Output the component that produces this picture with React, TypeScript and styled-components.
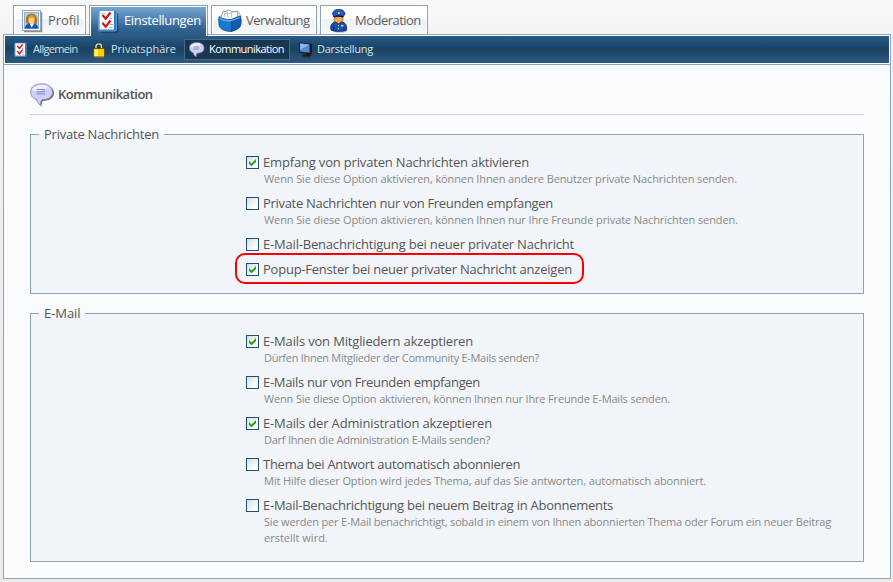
import React from 'react';
import styled, { createGlobalStyle, css } from 'styled-components';

const GlobalStyle = createGlobalStyle`
  * { box-sizing: border-box; }
  body {
    margin: 0;
    min-height: 582px;
    background: linear-gradient(#f9f9f9, #f3f3f3 36px, #ededed 260px, #ececec);
    font-family: "Open Sans", "Noto Sans", sans-serif;
    color: #555;
  }
`;

const Page = styled.div`
  width: 893px;
  height: 582px;
  padding: 5px 2px 0 3px;
  overflow: hidden;
`;

const Tabs = styled.nav`
  display: flex;
  gap: 3px;
  height: 29px;
  padding-left: 10px;
`;

const Caption = styled.span`
  padding-bottom: 2px;
`;

const Tab = styled.a<{ $width: number; $track: number; $active?: boolean }>`
  display: flex;
  align-items: center;
  gap: 4px;
  width: ${p => p.$width}px;
  height: 29px;
  padding: 1px 0 0 6px;
  border: 1px solid #8da4b7;
  border-bottom: 0;
  font-size: 13px;
  letter-spacing: ${p => p.$track}px;
  white-space: nowrap;
  color: #5d5d5d;
  background: linear-gradient(#fff 45%, #eef2f5 46%, #f5f7f9);
  box-shadow: inset 0 0 0 1px #fff;
  svg { flex: none; }
  ${p => p.$active && css`
    position: relative;
    z-index: 1;
    height: 31px;
    padding-bottom: 2px;
    color: #fff;
    background: linear-gradient(#79a8d4, #568ab9 35%, #316291 75%, #2b5a85);
    box-shadow: inset 2px 2px 0 -1px #fff, inset 1px 1px 0 #fff, inset -1px 0 0 #fff;
  `}
`;

const Frame = styled.div`
  width: 888px;
  height: 545px;
  border: 1px solid #8da4b7;
  background: #f9fbfd;
`;

const SubNav = styled.nav`
  display: flex;
  align-items: center;
  gap: 3px;
  height: 29px;
  padding: 0 3px;
  border: 1px solid #fff;
  background: linear-gradient(#2b5a85, #164369 43%, #1c405e 45%, #2b5a85);
`;

const SubRule = styled.div`
  height: 1px;
  background: #8da4b7;
`;

const SubItem = styled.a<{ $width: number; $track: number; $active?: boolean }>`
  display: flex;
  align-items: center;
  gap: 4px;
  width: ${p => p.$width}px;
  height: 21px;
  padding-left: 4px;
  border: 1px solid ${p => (p.$active ? '#426b8c' : 'transparent')};
  background: ${p => (p.$active ? '#183650' : 'transparent')};
  color: ${p => (p.$active ? '#fff' : '#d6e3ee')};
  font-size: 11px;
  letter-spacing: ${p => p.$track}px;
  white-space: nowrap;
  svg { flex: none; }
`;

const Content = styled.main`
  padding: 18px 26px 0;
`;

const Heading = styled.h1`
  display: flex;
  align-items: center;
  gap: 4px;
  height: 32px;
  margin: 0;
  padding-bottom: 8px;
  border-bottom: 1px solid #c3cfdb;
  font-size: 13px;
  font-weight: 600;
  letter-spacing: -0.5px;
`;

const Group = styled.fieldset<{ $height: number }>`
  display: block;
  height: ${p => p.$height}px;
  min-width: 0;
  margin: 10px 0 0;
  padding: 0 0 0 215px;
  border: 1px solid #8da4b7;
  background: #f1f5fa;
`;

const Legend = styled.legend<{ $track: number; $width: number }>`
  width: ${p => p.$width}px;
  height: 19px;
  margin-left: -207px;
  padding: 0 0 0 5px;
  font-size: 13px;
  line-height: 19px;
  letter-spacing: ${p => p.$track}px;
  white-space: nowrap;
`;

const Rows = styled.div`
  display: flex;
  flex-direction: column;
  gap: 8px;
  padding-top: 10px;
`;

const Row = styled.div`
  position: relative;
`;

const Label = styled.label<{ $track: number }>`
  display: flex;
  align-items: center;
  gap: 4px;
  height: 17px;
  font-size: 13px;
  line-height: 17px;
  letter-spacing: ${p => p.$track}px;
  white-space: nowrap;
`;

const Box = styled.span`
  display: flex;
  flex: none;
  width: 13px;
  height: 13px;
  border: 1px solid #1c5180;
  background: linear-gradient(135deg, #dcdcd7, #fff 80%);
`;

const Description = styled.p<{ $track: number }>`
  margin: 0;
  padding-left: 18px;
  font-size: 11px;
  line-height: 16px;
  letter-spacing: ${p => p.$track}px;
  white-space: nowrap;
  color: #888;
`;

const Marker = styled.div`
  position: absolute;
  top: -8px;
  left: -11px;
  width: 349px;
  height: 31px;
  border: 2px solid #fa0000;
  border-radius: 10px;
`;

const ProfileIcon = () => (
  <svg width="24" height="24" viewBox="0 0 24 24">
    <path d="M4 22.500h17.500V3" fill="none" stroke="#666" strokeWidth="1.600" opacity=".7" />
    <rect x="2.500" y="1.500" width="18" height="20" fill="#fff" stroke="#91a5c0" />
    <rect x="4.500" y="3.500" width="14" height="16" fill="#b8d5f8" stroke="#8aaee0" />
    <path d="M6.500 14.500C4.500 9 7 4.500 11.500 4.500S18.500 9 16.500 15z" fill="#b8730f" />
    <path d="M5 19.500c0-4 3-5.500 6.500-5.500s6.500 1.500 6.500 5.500z" fill="#1b55a5" />
    <path d="M9.500 14.200l2 4.300 3-4.300z" fill="#edf5ff" />
    <ellipse cx="11.500" cy="10.800" rx="3" ry="4" fill="#ffd392" />
    <path d="M8 10c.5-5 6-5.500 7.500-1-3 .3-4.500-1.500-7.500 1z" fill="#d9992a" />
  </svg>
);

const ChecklistIcon = ({ size }: { size: number }) => (
  <svg width={size} height={size} viewBox="0 0 24 24">
    <path d="M5 23h16.500V4" fill="none" stroke="#102840" strokeWidth="1.500" opacity=".6" />
    <rect x="2.500" y="1.500" width="18" height="20.500" rx="1" fill="#2e7cc4" stroke="#6ea2d2" strokeWidth=".8" />
    <path d="M3.500 2h14.500v18.500H3.500z" fill="#f7f9fc" />
    <path d="M13.500 9.500h3M14 15.500h3M13.500 18.500h3" stroke="#a4b2c3" strokeWidth="1.200" />
    <path d="M5.500 4.500h4M5.500 13h3" fill="none" stroke="#b3bfcf" />
    <path d="M6.500 6l3.200 3.700L14.500 3.500M6.500 14l3.200 3.700 4.800-6.200" fill="none" stroke="#d01616" strokeWidth="2.200" />
  </svg>
);

const DrawerIcon = () => (
  <svg width="24" height="24" viewBox="0 0 24 24">
    <path d="M2 8L6 3l14-1 3 5-8 6z" fill="#dfe3e6" stroke="#9ba2a8" strokeWidth=".7" />
    <path d="M3 9l2-7 3 1 1-2 4 .6 1 1.400 5-.6 1 5-7 4z" fill="#fafafa" stroke="#858c92" strokeWidth=".7" />
    <path d="M6 3l1 5M9 2l1 6M13 3l1 6M6 5l3-1M10 5l4-1" stroke="#b3b8bc" strokeWidth=".8" />
    <path d="M1 7.500c3 2.500 7 3.300 12 3 1.500 3 1.500 8 0 12C8 22.500 4 21 1.500 18 .5 14 .5 11 1 7.500z" fill="#1c78cd" stroke="#0e55a3" strokeWidth=".8" />
    <path d="M13 10.500L22.500 7c1 4 1 8-.5 11-3 2.500-5 3.800-9 4.500 1.400-4 1.400-8.500 0-12z" fill="#1260ad" stroke="#0a4688" strokeWidth=".8" />
    <path d="M1.500 9c3 2.500 7 3 11.500 2.700L22 8.500" fill="none" stroke="#61b3f0" strokeWidth="1.300" />
  </svg>
);

const OfficerIcon = () => (
  <svg width="24" height="24" viewBox="0 0 24 24">
    <ellipse cx="13" cy="22" rx="7" ry="1.600" fill="#777" opacity=".6" />
    <path d="M7 7h9v4c0 3-2 4.500-4.500 4.500S7 14 7 11z" fill="#f0aa54" stroke="#a55a11" strokeWidth=".6" />
    <path d="M4 21c-1-5 1-7.500 4.500-8l3 2 3-2c4 .5 5.500 3 5 8-4 1.800-12 1.800-15.500 0z" fill="#1a50bb" stroke="#082363" strokeWidth=".9" />
    <path d="M5.500 4.500C7 1 9 .5 11.500 .5S17 1 18 4.500L16 8c-3-1-6-1-9 0z" fill="#2259c6" stroke="#082363" strokeWidth=".9" />
    <path d="M7 7.800c3-1.200 6-1.200 9 0" stroke="#09163a" strokeWidth="1.300" fill="none" />
    <path d="M11 3h1.600v2H11zM14 16h2.500v1.500H14zM11 16h1v1.200h-1zM11 19h1v1.200h-1z" fill="#ffcf21" />
    <path d="M6.500 17v4M17 18v3" stroke="#0b2d78" />
  </svg>
);

const LockIcon = () => (
  <svg width="16" height="16" viewBox="0 0 16 16">
    <path d="M5 8V4.500c0-3.500 5.500-3.500 5.500 0V8" fill="none" stroke="#3f3a20" strokeWidth="3" />
    <path d="M5 8V4.500c0-3.500 5.500-3.500 5.500 0V8" fill="none" stroke="#e0dcc4" strokeWidth="1.400" />
    <rect x="2.500" y="6.500" width="11" height="8.800" rx="1" fill="#f5cd15" stroke="#5e480c" strokeWidth=".8" />
    <path d="M3.500 8h3.500v6h-3.500z" fill="#fff277" />
    <path d="M3 14.700h10" stroke="#b58508" />
  </svg>
);

const BubbleIcon = ({ size }: { size: number }) => (
  <svg width={size} height={size} viewBox="0 0 24 24">
    <path d="M13 1.800C6.500 1.800 1.500 4.500 1.500 10c0 4.500 3 6.500 6.500 7.500-.2 2.500 1.500 4.500 3.500 6 0-2.500.2-4.500 1.500-5.600 6.500-.2 11-3 11-8S19 1.800 13 1.800z" fill="#444a5c" opacity=".8" />
    <path d="M12 .8C5.500 .8 .7 3.500 .7 9c0 4.500 3 6.500 6 7.500-.2 2.500 1.800 4.200 3.900 5.500-.1-2.500.3-4 1.400-5.300 6.500 0 10.500-2.700 10.500-7.700S18 .8 12 .8z" fill="#cecefc" stroke="#8585b3" strokeWidth=".8" />
    <path d="M12 2C7 2 3 4 2 7c4 2 13 2 16-3.500C16.500 2.500 14.500 2 12 2z" fill="#efefff" />
    <path d="M6.500 6.500h8.500M6.500 8.700h8.500M6.500 10.900h8.500" stroke="#7a7aab" strokeWidth=".9" />
  </svg>
);

const MonitorIcon = () => (
  <svg width="15" height="16" viewBox="0 0 15 16">
    <path d="M3 13.500l5-2 6 1.500-2 2.500H6z" fill="#262b31" />
    <path d="M8 10h4v4H8z" fill="#15191e" />
    <path d="M1 .5l11.500 1.200 1.500 1v9L12 12.500 1 10.500z" fill="#171c23" />
    <path d="M2 1.500l9.500 1v8.300L2 9.400z" fill="#4a8bd3" />
    <path d="M2 1.500l9.500 1L2 8z" fill="#83b9ed" />
  </svg>
);

const Tick = () => (
  <svg width="11" height="11" viewBox="0 0 11 11">
    <path d="M2 3.900l2.500 2.500L9 2v3L4.500 9.300 2 6.900z" fill="#21a121" />
  </svg>
);

type Text = [text: string, track: number];
type Option = { label: Text; checked?: boolean; marked?: boolean; lines?: Text[] };

const privateMessages: Option[] = [
  { label: ['Empfang von privaten Nachrichten aktivieren', -0.171], checked: true,
    lines: [['Wenn Sie diese Option aktivieren, können Ihnen andere Benutzer private Nachrichten senden.', -0.102]] },
  { label: ['Private Nachrichten nur von Freunden empfangen', -0.306],
    lines: [['Wenn Sie diese Option aktivieren, können Ihnen nur Ihre Freunde private Nachrichten senden.', -0.103]] },
  { label: ['E-Mail-Benachrichtigung bei neuer privater Nachricht', -0.192] },
  { label: ['Popup-Fenster bei neuer privater Nachricht anzeigen', -0.231], checked: true, marked: true },
];

const email: Option[] = [
  { label: ['E-Mails von Mitgliedern akzeptieren', -0.165], checked: true,
    lines: [['Dürfen Ihnen Mitglieder der Community E-Mails senden?', -0.287]] },
  { label: ['E-Mails nur von Freunden empfangen', -0.318],
    lines: [['Wenn Sie diese Option aktivieren, können Ihnen nur Ihre Freunde E-Mails senden.', -0.161]] },
  { label: ['E-Mails der Administration akzeptieren', -0.153], checked: true,
    lines: [['Darf Ihnen die Administration E-Mails senden?', -0.239]] },
  { label: ['Thema bei Antwort automatisch abonnieren', -0.26],
    lines: [['Mit Hilfe dieser Option wird jedes Thema, auf das Sie antworten, automatisch abonniert.', -0.112]] },
  { label: ['E-Mail-Benachrichtigung bei neuem Beitrag in Abonnements', -0.264],
    lines: [
      ['Sie werden per E-Mail benachrichtigt, sobald in einem von Ihnen abonnierten Thema oder Forum ein neuer Beitrag', -0.188],
      ['erstellt wird.', 0],
    ] },
];

const OptionList = ({ options }: { options: Option[] }) => (
  <Rows>
    {options.map(({ label, checked, marked, lines = [] }) => (
      <Row key={label[0]}>
        <Label $track={label[1]}>
          <Box role="checkbox" aria-checked={!!checked}>{checked && <Tick />}</Box>
          {label[0]}
        </Label>
        {lines.map(([text, track]) => (
          <Description key={text} $track={track}>{text}</Description>
        ))}
        {marked && <Marker />}
      </Row>
    ))}
  </Rows>
);

export default function App() {
  return (
    <Page>
      <GlobalStyle />
      <Tabs>
        <Tab $width={73} $track={-0.06}><ProfileIcon /><Caption>Profil</Caption></Tab>
        <Tab $width={119} $track={-0.36} $active><ChecklistIcon size={24} /><Caption>Einstellungen</Caption></Tab>
        <Tab $width={106} $track={-0.5}><DrawerIcon /><Caption>Verwaltung</Caption></Tab>
        <Tab $width={108} $track={-0.52}><OfficerIcon /><Caption>Moderation</Caption></Tab>
      </Tabs>
      <Frame>
        <SubNav>
          <SubItem $width={75} $track={-0.67}><ChecklistIcon size={16} /><Caption>Allgemein</Caption></SubItem>
          <SubItem $width={95} $track={0}><LockIcon /><Caption>Privatsphäre</Caption></SubItem>
          <SubItem $width={106} $track={-0.53} $active><BubbleIcon size={16} /><Caption>Kommunikation</Caption></SubItem>
          <SubItem $width={90} $track={-0.27}><MonitorIcon /><Caption>Darstellung</Caption></SubItem>
        </SubNav>
        <SubRule />
        <Content>
          <Heading><BubbleIcon size={24} /><Caption>Kommunikation</Caption></Heading>
          <Group $height={169}>
            <Legend $width={125} $track={-0.23}>Private Nachrichten</Legend>
            <OptionList options={privateMessages} />
          </Group>
          <Group $height={258}>
            <Legend $width={46} $track={-0.06}>E-Mail</Legend>
            <OptionList options={email} />
          </Group>
        </Content>
      </Frame>
    </Page>
  );
}
